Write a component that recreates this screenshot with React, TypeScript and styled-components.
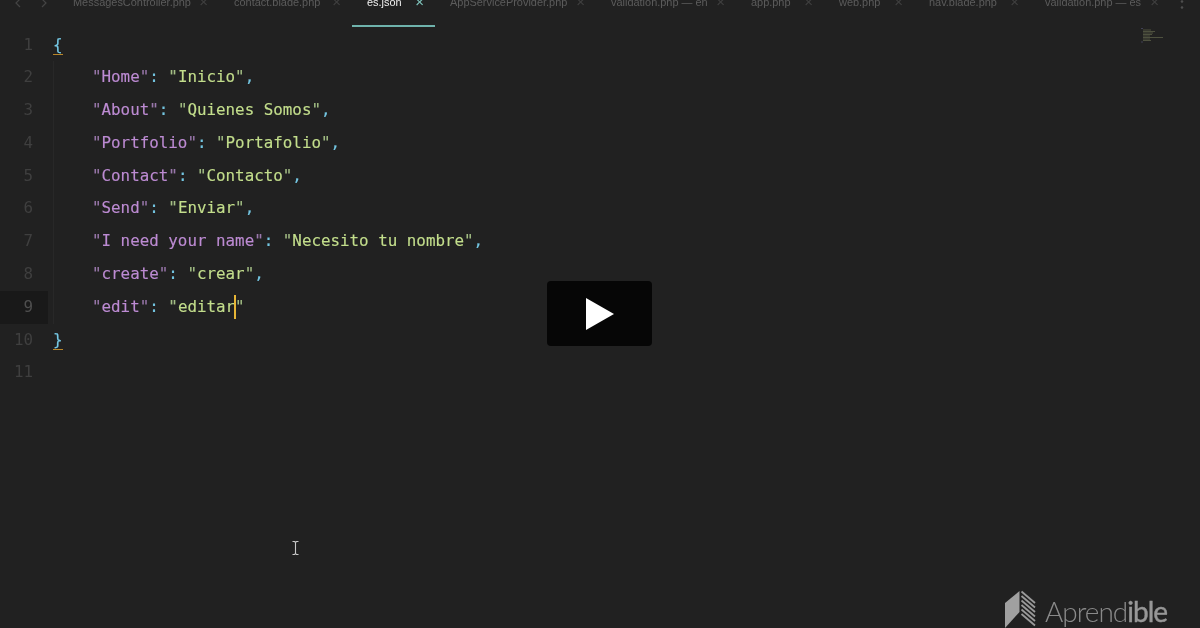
import React from "react";
import styled, { createGlobalStyle } from "styled-components";

const Global = createGlobalStyle`
  html, body { margin: 0; padding: 0; background: #212121; }
  body { width: 1200px; height: 628px; overflow: hidden; }
`;

const Page = styled.div`
  position: relative;
  width: 1200px;
  height: 628px;
  overflow: hidden;
  background: #212121;
  display: flex;
  flex-direction: column;
`;

const TabBar = styled.div`
  display: flex;
  height: 27px;
  flex: none;
  overflow: hidden;
  filter: blur(0.5px);
  font-family: "Liberation Sans", Arial, sans-serif;
  font-size: 10.95px;
`;

const Nav = styled.div`
  width: 58px;
  flex: none;
  display: flex;
  padding-left: 13px;
  gap: 16px;
  box-sizing: border-box;
`;

const Tab = styled.div<{ $w: number; $active?: boolean }>`
  width: ${(p) => p.$w}px;
  flex: none;
  box-sizing: border-box;
  display: flex;
  justify-content: space-between;
  align-items: flex-start;
  padding: 0 11px 0 15px;
  color: ${(p) => (p.$active ? "#f0f0f0" : "#5c5c5c")};
  border-bottom: 2px solid ${(p) => (p.$active ? "#6fb3ac" : "transparent")};
`;

const TabLabel = styled.span`
  margin-top: -5px;
  line-height: 14px;
  white-space: nowrap;
`;

const TabClose = styled.span<{ $active?: boolean }>`
  margin-top: -5px;
  font-size: 15px;
  line-height: 14px;
  color: ${(p) => (p.$active ? "#7fc4bc" : "#3f3f3f")};
`;

const Overflow = styled.div`
  width: 24px;
  flex: none;
  display: flex;
  justify-content: center;
`;

const Editor = styled.div`
  display: flex;
  flex-direction: column;
  padding-top: 1.5px;
  font-family: "DejaVu Sans Mono", "Liberation Mono", monospace;
  font-size: 15.85px;
  -webkit-text-stroke: 0.15px currentColor;
  filter: blur(0.3px);
`;

const Line = styled.div`
  display: flex;
  height: 32.8px;
  line-height: 32.8px;
  white-space: pre;
`;

const Gutter = styled.div<{ $active?: boolean }>`
  width: 48px;
  flex: none;
  box-sizing: border-box;
  padding-right: 15px;
  text-align: right;
  margin-right: 5px;
  -webkit-text-stroke: 0;
  color: ${(p) => (p.$active ? "#4e4e4e" : "#3f3f3f")};
  background: ${(p) => (p.$active ? "#191919" : "transparent")};
`;

const Indent = styled.span`
  width: 39px;
  flex: none;
  box-sizing: border-box;
  border-left: 1px solid #282828;
`;

const Key = styled.span`
  color: #bd8bd3;
`;
const KeyQuote = styled.span`
  color: #9a78ac;
`;
const Str = styled.span`
  color: #c3de8c;
`;
const StrQuote = styled.span`
  color: #a4bf85;
`;
const Punct = styled.span`
  color: #74c6e2;
`;

const Brace = styled.span`
  position: relative;
  color: #74c6e2;
  &::after {
    content: "";
    position: absolute;
    left: 0;
    right: 0;
    bottom: 6px;
    height: 1px;
    background: #b8862a;
  }
`;

const Caret = styled.span`
  display: inline-block;
  flex: none;
  width: 2px;
  height: 24px;
  margin: 4px -1px 0;
  background: #e6b536;
`;

const PlayButton = styled.div`
  position: absolute;
  left: 547px;
  top: 281px;
  width: 105px;
  height: 65px;
  border-radius: 4px;
  background: #060606;
  display: flex;
  align-items: center;
  justify-content: center;
`;

const Minimap = styled.svg`
  position: absolute;
  left: 1138px;
  top: 26px;
  filter: blur(0.6px);
`;

const IBeam = styled.svg`
  position: absolute;
  left: 291px;
  top: 540px;
`;

const Logo = styled.div`
  position: absolute;
  left: 1004px;
  top: 590px;
  display: flex;
  align-items: flex-start;
  gap: 9px;
  filter: blur(0.3px);
`;

const LogoText = styled.span`
  font-family: "Lato", "Liberation Sans", sans-serif;
  font-weight: 300;
  font-size: 28px;
  letter-spacing: -1px;
  line-height: 43px;
  color: #8a8a8a;
`;

const LogoBold = styled.span`
  font-weight: 400;
  -webkit-text-stroke: 0.4px currentColor;
  color: #979797;
`;

type Entry = [string, string];
const entries: Entry[] = [
  ["Home", "Inicio"],
  ["About", "Quienes Somos"],
  ["Portfolio", "Portafolio"],
  ["Contact", "Contacto"],
  ["Send", "Enviar"],
  ["I need your name", "Necesito tu nombre"],
  ["create", "crear"],
];

const tabs: { name: string; w: number; active?: boolean }[] = [
  { name: "MessagesController.php", w: 161 },
  { name: "contact.blade.php", w: 133 },
  { name: "es.json", w: 83, active: true },
  { name: "AppServiceProvider.php", w: 161 },
  { name: "validation.php — en", w: 140 },
  { name: "app.php", w: 88 },
  { name: "web.php", w: 90 },
  { name: "nav.blade.php", w: 116 },
  { name: "validation.php — es", w: 140 },
];

const miniRows: [number, number, string][] = [
  [3, 2, "#77a"],
  [5, 8, "#99a070"],
  [5, 12, "#99a070"],
  [5, 10, "#99a070"],
  [5, 9, "#99a070"],
  [5, 7, "#99a070"],
  [5, 20, "#99a070"],
  [5, 7, "#99a070"],
  [5, 8, "#99a070"],
  [3, 2, "#77a"],
];

export default function App() {
  return (
    <Page>
      <Global />
      <TabBar>
        <Nav>
          <svg width="10" height="10" viewBox="0 0 10 10" fill="none" stroke="#444" strokeWidth="1.2">
            <path d="M7 -1 L3 3 L7 7" />
          </svg>
          <svg width="10" height="10" viewBox="0 0 10 10" fill="none" stroke="#444" strokeWidth="1.2">
            <path d="M3 -1 L7 3 L3 7" />
          </svg>
        </Nav>
        {tabs.map((t) => (
          <Tab key={t.name} $w={t.w} $active={t.active}>
            <TabLabel>{t.name}</TabLabel>
            <TabClose $active={t.active}>×</TabClose>
          </Tab>
        ))}
        <Overflow>
          <svg width="4" height="12" viewBox="0 0 4 12" fill="#4e4e4e">
            <circle cx="2" cy="1.5" r="1.3" />
            <circle cx="2" cy="7.5" r="1.3" />
          </svg>
        </Overflow>
      </TabBar>
      <Editor>
        <Line>
          <Gutter>1</Gutter>
          <Brace>{"{"}</Brace>
        </Line>
        {entries.map(([k, v], i) => (
          <Line key={k}>
            <Gutter>{i + 2}</Gutter>
            <Indent />
            <KeyQuote>"</KeyQuote>
            <Key>{k}</Key>
            <KeyQuote>"</KeyQuote>
            <Punct>: </Punct>
            <StrQuote>"</StrQuote>
            <Str>{v}</Str>
            <StrQuote>"</StrQuote>
            <Punct>,</Punct>
          </Line>
        ))}
        <Line>
          <Gutter $active>9</Gutter>
          <Indent />
          <KeyQuote>"</KeyQuote>
          <Key>edit</Key>
          <KeyQuote>"</KeyQuote>
          <Punct>: </Punct>
          <StrQuote>"</StrQuote>
          <Str>editar</Str>
          <Caret />
          <StrQuote>"</StrQuote>
        </Line>
        <Line>
          <Gutter>10</Gutter>
          <Brace>{"}"}</Brace>
        </Line>
        <Line>
          <Gutter>11</Gutter>
        </Line>
      </Editor>

      <Minimap width="28" height="20" viewBox="0 0 28 20">
        {miniRows.map(([x, w, c], i) => (
          <rect key={i} x={x} y={2 + i * 1.5} width={w} height="1" fill={c} opacity="0.38" />
        ))}
      </Minimap>

      <PlayButton>
        <svg width="30" height="34" viewBox="0 0 30 34">
          <path d="M1 1 L29 17 L1 33 Z" fill="#ffffff" />
        </svg>
      </PlayButton>

      <IBeam width="9" height="16" viewBox="0 0 9 16" fill="none" stroke="#c8c8c8" strokeWidth="1.1">
        <path d="M1.5 1.5 H3.5 L4.5 2.5 L5.5 1.5 H7.5 M4.5 2.5 V13.5 M1.5 14.5 H3.5 L4.5 13.5 L5.5 14.5 H7.5" />
      </IBeam>

      <Logo>
        <svg width="32" height="38" viewBox="0 0 32 38">
          <path d="M1 13 L15.5 1 V22 L1 38 Z" fill="#a0a0a0" />
          <g stroke="#9a9a9a" strokeWidth="1.8" fill="none">
            <path d="M17.5 1.5 L31 13" />
            <path d="M17.5 6 L31 17.5" />
            <path d="M17.5 10.5 L31 22" />
            <path d="M17.5 15 L31 26.5" />
            <path d="M17.5 19.5 L31 31" />
            <path d="M17.5 24 L31 35.5" />
          </g>
        </svg>
        <LogoText>
          Aprend<LogoBold>ible</LogoBold>
        </LogoText>
      </Logo>
    </Page>
  );
}
